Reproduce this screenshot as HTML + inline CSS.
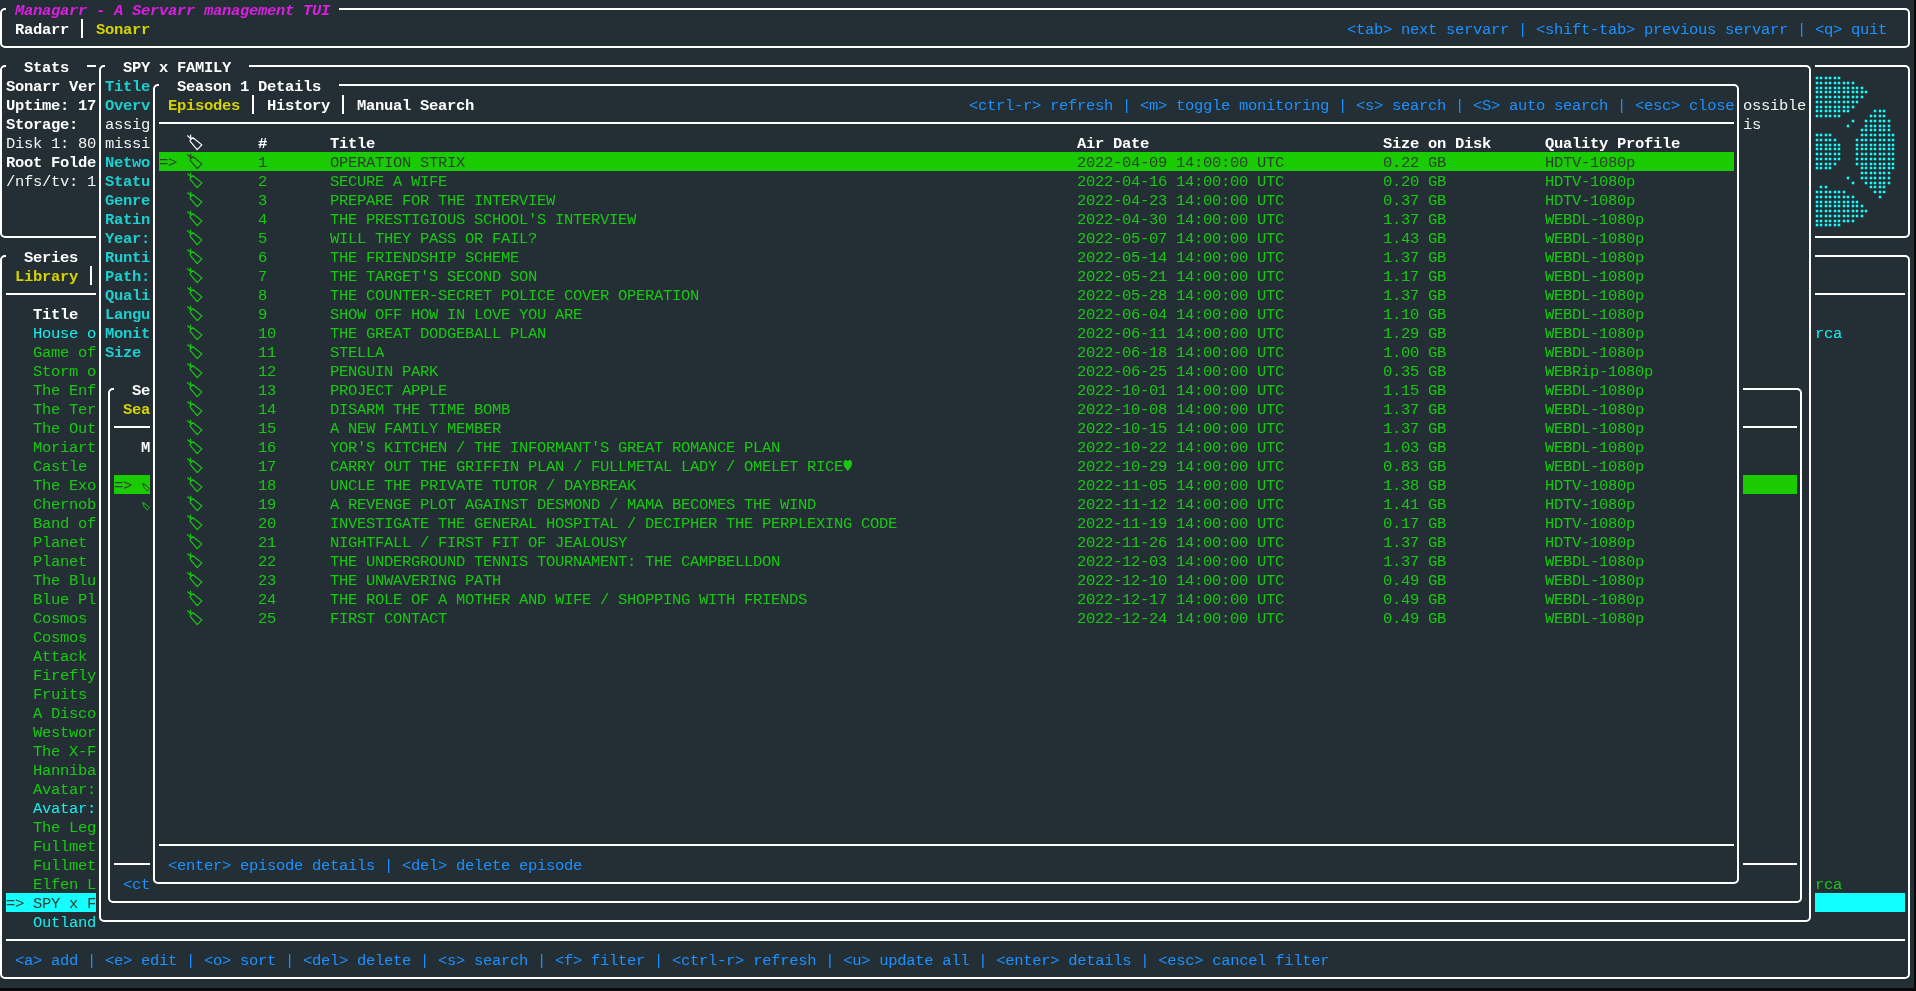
<!DOCTYPE html>
<html><head><meta charset="utf-8"><style>
html,body{margin:0;padding:0;}
body{width:1916px;height:991px;background:#0a0a0a;position:relative;overflow:hidden;}
#term{position:absolute;left:0;top:0;width:1913.5px;height:988px;background:#232f34;overflow:hidden;}
.t{position:absolute;will-change:transform;white-space:pre;font-family:"Liberation Mono",monospace;font-size:15.5px;letter-spacing:-0.3px;line-height:19px;height:19px;}
.b{font-weight:bold;}
.i{font-style:italic;}
.f{position:absolute;}
.bx{position:absolute;border:2px solid #fff;border-radius:5px;}
.tg{position:absolute;overflow:visible;}
</style></head><body><div id="term">
<svg width="0" height="0" style="position:absolute"><defs><g id="tag" fill="none" stroke-linejoin="round" stroke-linecap="round"><path d="M5.0 5.9 L1.6 2.8 M5.0 5.9 L4.6 2.1"/><path d="M7.0 4.7 L15.9 11.9 L11.2 16.6 L4.4 8.6 Q3.7 7.6 4.4 6.9 Z"/></g></defs></svg>
<div class="f" style="left:-3.5px;top:0px;width:1917px;height:57px;background:#232f34"></div>
<div class="bx" style="left:0px;top:8px;width:1906px;height:36px"></div>
<div class="f" style="left:5.5px;top:0px;width:333px;height:19px;background:#232f34"></div>
<div class="t b i" style="left:5.85px;top:2px;color:#da1fe0"> Managarr - A Servarr management TUI </div>
<div class="t b" style="left:14.85px;top:21px;color:#ffffff">Radarr</div>
<div class="f" style="left:81px;top:19px;width:2px;height:19px;background:#fff"></div>
<div class="t b" style="left:95.85px;top:21px;color:#d6d300">Sonarr</div>
<div class="t" style="left:1346.85px;top:21px;color:#1e90ff">&lt;tab&gt; next servarr | &lt;shift-tab&gt; previous servarr | &lt;q&gt; quit</div>
<div class="f" style="left:-3.5px;top:57px;width:549px;height:190px;background:#232f34"></div>
<div class="bx" style="left:0px;top:65px;width:538px;height:169px"></div>
<div class="f" style="left:5.5px;top:57px;width:81px;height:19px;background:#232f34"></div>
<div class="t b" style="left:5.85px;top:59px;color:#ffffff">  Stats  </div>
<div class="t b" style="left:5.85px;top:78px;color:#ffffff">Sonarr Ver</div>
<div class="t b" style="left:5.85px;top:97px;color:#ffffff">Uptime: 17</div>
<div class="t b" style="left:5.85px;top:116px;color:#ffffff">Storage:</div>
<div class="t" style="left:5.85px;top:135px;color:#f4f4f4">Disk 1: 80</div>
<div class="t b" style="left:5.85px;top:154px;color:#ffffff">Root Folde</div>
<div class="t" style="left:5.85px;top:173px;color:#f4f4f4">/nfs/tv: 1</div>
<div class="f" style="left:1346.5px;top:57px;width:567px;height:190px;background:#232f34"></div>
<div class="bx" style="left:1350px;top:65px;width:556px;height:169px"></div>
<svg class="tg" style="left:1800px;top:70px" width="110" height="165" fill="#14ffff"><rect x="15.75" y="6.75" width="2.5" height="2.5"/><rect x="19.75" y="6.75" width="2.5" height="2.5"/><rect x="24.75" y="6.75" width="2.5" height="2.5"/><rect x="28.75" y="6.75" width="2.5" height="2.5"/><rect x="33.75" y="6.75" width="2.5" height="2.5"/><rect x="37.75" y="6.75" width="2.5" height="2.5"/><rect x="15.75" y="11.75" width="2.5" height="2.5"/><rect x="19.75" y="11.75" width="2.5" height="2.5"/><rect x="24.75" y="11.75" width="2.5" height="2.5"/><rect x="28.75" y="11.75" width="2.5" height="2.5"/><rect x="33.75" y="11.75" width="2.5" height="2.5"/><rect x="37.75" y="11.75" width="2.5" height="2.5"/><rect x="42.75" y="11.75" width="2.5" height="2.5"/><rect x="46.75" y="11.75" width="2.5" height="2.5"/><rect x="51.75" y="11.75" width="2.5" height="2.5"/><rect x="15.75" y="16.75" width="2.5" height="2.5"/><rect x="19.75" y="16.75" width="2.5" height="2.5"/><rect x="24.75" y="16.75" width="2.5" height="2.5"/><rect x="28.75" y="16.75" width="2.5" height="2.5"/><rect x="33.75" y="16.75" width="2.5" height="2.5"/><rect x="37.75" y="16.75" width="2.5" height="2.5"/><rect x="42.75" y="16.75" width="2.5" height="2.5"/><rect x="46.75" y="16.75" width="2.5" height="2.5"/><rect x="51.75" y="16.75" width="2.5" height="2.5"/><rect x="55.75" y="16.75" width="2.5" height="2.5"/><rect x="60.75" y="16.75" width="2.5" height="2.5"/><rect x="15.75" y="20.75" width="2.5" height="2.5"/><rect x="19.75" y="20.75" width="2.5" height="2.5"/><rect x="24.75" y="20.75" width="2.5" height="2.5"/><rect x="28.75" y="20.75" width="2.5" height="2.5"/><rect x="33.75" y="20.75" width="2.5" height="2.5"/><rect x="37.75" y="20.75" width="2.5" height="2.5"/><rect x="42.75" y="20.75" width="2.5" height="2.5"/><rect x="46.75" y="20.75" width="2.5" height="2.5"/><rect x="51.75" y="20.75" width="2.5" height="2.5"/><rect x="55.75" y="20.75" width="2.5" height="2.5"/><rect x="60.75" y="20.75" width="2.5" height="2.5"/><rect x="64.75" y="20.75" width="2.5" height="2.5"/><rect x="15.75" y="25.75" width="2.5" height="2.5"/><rect x="19.75" y="25.75" width="2.5" height="2.5"/><rect x="24.75" y="25.75" width="2.5" height="2.5"/><rect x="28.75" y="25.75" width="2.5" height="2.5"/><rect x="33.75" y="25.75" width="2.5" height="2.5"/><rect x="37.75" y="25.75" width="2.5" height="2.5"/><rect x="42.75" y="25.75" width="2.5" height="2.5"/><rect x="46.75" y="25.75" width="2.5" height="2.5"/><rect x="51.75" y="25.75" width="2.5" height="2.5"/><rect x="55.75" y="25.75" width="2.5" height="2.5"/><rect x="60.75" y="25.75" width="2.5" height="2.5"/><rect x="15.75" y="30.75" width="2.5" height="2.5"/><rect x="19.75" y="30.75" width="2.5" height="2.5"/><rect x="24.75" y="30.75" width="2.5" height="2.5"/><rect x="28.75" y="30.75" width="2.5" height="2.5"/><rect x="33.75" y="30.75" width="2.5" height="2.5"/><rect x="37.75" y="30.75" width="2.5" height="2.5"/><rect x="42.75" y="30.75" width="2.5" height="2.5"/><rect x="46.75" y="30.75" width="2.5" height="2.5"/><rect x="51.75" y="30.75" width="2.5" height="2.5"/><rect x="55.75" y="30.75" width="2.5" height="2.5"/><rect x="15.75" y="35.75" width="2.5" height="2.5"/><rect x="19.75" y="35.75" width="2.5" height="2.5"/><rect x="24.75" y="35.75" width="2.5" height="2.5"/><rect x="28.75" y="35.75" width="2.5" height="2.5"/><rect x="33.75" y="35.75" width="2.5" height="2.5"/><rect x="37.75" y="35.75" width="2.5" height="2.5"/><rect x="42.75" y="35.75" width="2.5" height="2.5"/><rect x="46.75" y="35.75" width="2.5" height="2.5"/><rect x="51.75" y="35.75" width="2.5" height="2.5"/><rect x="15.75" y="39.75" width="2.5" height="2.5"/><rect x="19.75" y="39.75" width="2.5" height="2.5"/><rect x="24.75" y="39.75" width="2.5" height="2.5"/><rect x="28.75" y="39.75" width="2.5" height="2.5"/><rect x="33.75" y="39.75" width="2.5" height="2.5"/><rect x="37.75" y="39.75" width="2.5" height="2.5"/><rect x="42.75" y="39.75" width="2.5" height="2.5"/><rect x="46.75" y="39.75" width="2.5" height="2.5"/><rect x="73.75" y="39.75" width="2.5" height="2.5"/><rect x="78.75" y="39.75" width="2.5" height="2.5"/><rect x="82.75" y="39.75" width="2.5" height="2.5"/><rect x="15.75" y="44.75" width="2.5" height="2.5"/><rect x="19.75" y="44.75" width="2.5" height="2.5"/><rect x="24.75" y="44.75" width="2.5" height="2.5"/><rect x="28.75" y="44.75" width="2.5" height="2.5"/><rect x="33.75" y="44.75" width="2.5" height="2.5"/><rect x="37.75" y="44.75" width="2.5" height="2.5"/><rect x="69.75" y="44.75" width="2.5" height="2.5"/><rect x="73.75" y="44.75" width="2.5" height="2.5"/><rect x="78.75" y="44.75" width="2.5" height="2.5"/><rect x="82.75" y="44.75" width="2.5" height="2.5"/><rect x="51.75" y="49.75" width="2.5" height="2.5"/><rect x="64.75" y="49.75" width="2.5" height="2.5"/><rect x="69.75" y="49.75" width="2.5" height="2.5"/><rect x="73.75" y="49.75" width="2.5" height="2.5"/><rect x="78.75" y="49.75" width="2.5" height="2.5"/><rect x="82.75" y="49.75" width="2.5" height="2.5"/><rect x="87.75" y="49.75" width="2.5" height="2.5"/><rect x="46.75" y="54.75" width="2.5" height="2.5"/><rect x="64.75" y="54.75" width="2.5" height="2.5"/><rect x="69.75" y="54.75" width="2.5" height="2.5"/><rect x="73.75" y="54.75" width="2.5" height="2.5"/><rect x="78.75" y="54.75" width="2.5" height="2.5"/><rect x="82.75" y="54.75" width="2.5" height="2.5"/><rect x="87.75" y="54.75" width="2.5" height="2.5"/><rect x="60.75" y="58.75" width="2.5" height="2.5"/><rect x="64.75" y="58.75" width="2.5" height="2.5"/><rect x="69.75" y="58.75" width="2.5" height="2.5"/><rect x="73.75" y="58.75" width="2.5" height="2.5"/><rect x="78.75" y="58.75" width="2.5" height="2.5"/><rect x="82.75" y="58.75" width="2.5" height="2.5"/><rect x="87.75" y="58.75" width="2.5" height="2.5"/><rect x="15.75" y="63.75" width="2.5" height="2.5"/><rect x="19.75" y="63.75" width="2.5" height="2.5"/><rect x="24.75" y="63.75" width="2.5" height="2.5"/><rect x="28.75" y="63.75" width="2.5" height="2.5"/><rect x="60.75" y="63.75" width="2.5" height="2.5"/><rect x="64.75" y="63.75" width="2.5" height="2.5"/><rect x="69.75" y="63.75" width="2.5" height="2.5"/><rect x="73.75" y="63.75" width="2.5" height="2.5"/><rect x="78.75" y="63.75" width="2.5" height="2.5"/><rect x="82.75" y="63.75" width="2.5" height="2.5"/><rect x="87.75" y="63.75" width="2.5" height="2.5"/><rect x="91.75" y="63.75" width="2.5" height="2.5"/><rect x="15.75" y="68.75" width="2.5" height="2.5"/><rect x="19.75" y="68.75" width="2.5" height="2.5"/><rect x="24.75" y="68.75" width="2.5" height="2.5"/><rect x="28.75" y="68.75" width="2.5" height="2.5"/><rect x="33.75" y="68.75" width="2.5" height="2.5"/><rect x="55.75" y="68.75" width="2.5" height="2.5"/><rect x="60.75" y="68.75" width="2.5" height="2.5"/><rect x="64.75" y="68.75" width="2.5" height="2.5"/><rect x="69.75" y="68.75" width="2.5" height="2.5"/><rect x="73.75" y="68.75" width="2.5" height="2.5"/><rect x="78.75" y="68.75" width="2.5" height="2.5"/><rect x="82.75" y="68.75" width="2.5" height="2.5"/><rect x="87.75" y="68.75" width="2.5" height="2.5"/><rect x="91.75" y="68.75" width="2.5" height="2.5"/><rect x="15.75" y="73.75" width="2.5" height="2.5"/><rect x="19.75" y="73.75" width="2.5" height="2.5"/><rect x="24.75" y="73.75" width="2.5" height="2.5"/><rect x="28.75" y="73.75" width="2.5" height="2.5"/><rect x="33.75" y="73.75" width="2.5" height="2.5"/><rect x="37.75" y="73.75" width="2.5" height="2.5"/><rect x="55.75" y="73.75" width="2.5" height="2.5"/><rect x="60.75" y="73.75" width="2.5" height="2.5"/><rect x="64.75" y="73.75" width="2.5" height="2.5"/><rect x="69.75" y="73.75" width="2.5" height="2.5"/><rect x="73.75" y="73.75" width="2.5" height="2.5"/><rect x="78.75" y="73.75" width="2.5" height="2.5"/><rect x="82.75" y="73.75" width="2.5" height="2.5"/><rect x="87.75" y="73.75" width="2.5" height="2.5"/><rect x="91.75" y="73.75" width="2.5" height="2.5"/><rect x="15.75" y="77.75" width="2.5" height="2.5"/><rect x="19.75" y="77.75" width="2.5" height="2.5"/><rect x="24.75" y="77.75" width="2.5" height="2.5"/><rect x="28.75" y="77.75" width="2.5" height="2.5"/><rect x="33.75" y="77.75" width="2.5" height="2.5"/><rect x="37.75" y="77.75" width="2.5" height="2.5"/><rect x="55.75" y="77.75" width="2.5" height="2.5"/><rect x="60.75" y="77.75" width="2.5" height="2.5"/><rect x="64.75" y="77.75" width="2.5" height="2.5"/><rect x="69.75" y="77.75" width="2.5" height="2.5"/><rect x="73.75" y="77.75" width="2.5" height="2.5"/><rect x="78.75" y="77.75" width="2.5" height="2.5"/><rect x="82.75" y="77.75" width="2.5" height="2.5"/><rect x="87.75" y="77.75" width="2.5" height="2.5"/><rect x="91.75" y="77.75" width="2.5" height="2.5"/><rect x="15.75" y="82.75" width="2.5" height="2.5"/><rect x="19.75" y="82.75" width="2.5" height="2.5"/><rect x="24.75" y="82.75" width="2.5" height="2.5"/><rect x="28.75" y="82.75" width="2.5" height="2.5"/><rect x="33.75" y="82.75" width="2.5" height="2.5"/><rect x="37.75" y="82.75" width="2.5" height="2.5"/><rect x="55.75" y="82.75" width="2.5" height="2.5"/><rect x="60.75" y="82.75" width="2.5" height="2.5"/><rect x="64.75" y="82.75" width="2.5" height="2.5"/><rect x="69.75" y="82.75" width="2.5" height="2.5"/><rect x="73.75" y="82.75" width="2.5" height="2.5"/><rect x="78.75" y="82.75" width="2.5" height="2.5"/><rect x="82.75" y="82.75" width="2.5" height="2.5"/><rect x="87.75" y="82.75" width="2.5" height="2.5"/><rect x="91.75" y="82.75" width="2.5" height="2.5"/><rect x="15.75" y="87.75" width="2.5" height="2.5"/><rect x="19.75" y="87.75" width="2.5" height="2.5"/><rect x="24.75" y="87.75" width="2.5" height="2.5"/><rect x="28.75" y="87.75" width="2.5" height="2.5"/><rect x="33.75" y="87.75" width="2.5" height="2.5"/><rect x="37.75" y="87.75" width="2.5" height="2.5"/><rect x="55.75" y="87.75" width="2.5" height="2.5"/><rect x="60.75" y="87.75" width="2.5" height="2.5"/><rect x="64.75" y="87.75" width="2.5" height="2.5"/><rect x="69.75" y="87.75" width="2.5" height="2.5"/><rect x="73.75" y="87.75" width="2.5" height="2.5"/><rect x="78.75" y="87.75" width="2.5" height="2.5"/><rect x="82.75" y="87.75" width="2.5" height="2.5"/><rect x="87.75" y="87.75" width="2.5" height="2.5"/><rect x="91.75" y="87.75" width="2.5" height="2.5"/><rect x="15.75" y="92.75" width="2.5" height="2.5"/><rect x="19.75" y="92.75" width="2.5" height="2.5"/><rect x="24.75" y="92.75" width="2.5" height="2.5"/><rect x="28.75" y="92.75" width="2.5" height="2.5"/><rect x="33.75" y="92.75" width="2.5" height="2.5"/><rect x="55.75" y="92.75" width="2.5" height="2.5"/><rect x="60.75" y="92.75" width="2.5" height="2.5"/><rect x="64.75" y="92.75" width="2.5" height="2.5"/><rect x="69.75" y="92.75" width="2.5" height="2.5"/><rect x="73.75" y="92.75" width="2.5" height="2.5"/><rect x="78.75" y="92.75" width="2.5" height="2.5"/><rect x="82.75" y="92.75" width="2.5" height="2.5"/><rect x="87.75" y="92.75" width="2.5" height="2.5"/><rect x="91.75" y="92.75" width="2.5" height="2.5"/><rect x="15.75" y="96.75" width="2.5" height="2.5"/><rect x="19.75" y="96.75" width="2.5" height="2.5"/><rect x="24.75" y="96.75" width="2.5" height="2.5"/><rect x="28.75" y="96.75" width="2.5" height="2.5"/><rect x="60.75" y="96.75" width="2.5" height="2.5"/><rect x="64.75" y="96.75" width="2.5" height="2.5"/><rect x="69.75" y="96.75" width="2.5" height="2.5"/><rect x="73.75" y="96.75" width="2.5" height="2.5"/><rect x="78.75" y="96.75" width="2.5" height="2.5"/><rect x="82.75" y="96.75" width="2.5" height="2.5"/><rect x="87.75" y="96.75" width="2.5" height="2.5"/><rect x="91.75" y="96.75" width="2.5" height="2.5"/><rect x="60.75" y="101.75" width="2.5" height="2.5"/><rect x="64.75" y="101.75" width="2.5" height="2.5"/><rect x="69.75" y="101.75" width="2.5" height="2.5"/><rect x="73.75" y="101.75" width="2.5" height="2.5"/><rect x="78.75" y="101.75" width="2.5" height="2.5"/><rect x="82.75" y="101.75" width="2.5" height="2.5"/><rect x="87.75" y="101.75" width="2.5" height="2.5"/><rect x="46.75" y="106.75" width="2.5" height="2.5"/><rect x="60.75" y="106.75" width="2.5" height="2.5"/><rect x="64.75" y="106.75" width="2.5" height="2.5"/><rect x="69.75" y="106.75" width="2.5" height="2.5"/><rect x="73.75" y="106.75" width="2.5" height="2.5"/><rect x="78.75" y="106.75" width="2.5" height="2.5"/><rect x="82.75" y="106.75" width="2.5" height="2.5"/><rect x="87.75" y="106.75" width="2.5" height="2.5"/><rect x="51.75" y="111.75" width="2.5" height="2.5"/><rect x="64.75" y="111.75" width="2.5" height="2.5"/><rect x="69.75" y="111.75" width="2.5" height="2.5"/><rect x="73.75" y="111.75" width="2.5" height="2.5"/><rect x="78.75" y="111.75" width="2.5" height="2.5"/><rect x="82.75" y="111.75" width="2.5" height="2.5"/><rect x="87.75" y="111.75" width="2.5" height="2.5"/><rect x="19.75" y="115.75" width="2.5" height="2.5"/><rect x="24.75" y="115.75" width="2.5" height="2.5"/><rect x="69.75" y="115.75" width="2.5" height="2.5"/><rect x="73.75" y="115.75" width="2.5" height="2.5"/><rect x="78.75" y="115.75" width="2.5" height="2.5"/><rect x="82.75" y="115.75" width="2.5" height="2.5"/><rect x="15.75" y="120.75" width="2.5" height="2.5"/><rect x="19.75" y="120.75" width="2.5" height="2.5"/><rect x="24.75" y="120.75" width="2.5" height="2.5"/><rect x="28.75" y="120.75" width="2.5" height="2.5"/><rect x="33.75" y="120.75" width="2.5" height="2.5"/><rect x="37.75" y="120.75" width="2.5" height="2.5"/><rect x="42.75" y="120.75" width="2.5" height="2.5"/><rect x="73.75" y="120.75" width="2.5" height="2.5"/><rect x="78.75" y="120.75" width="2.5" height="2.5"/><rect x="82.75" y="120.75" width="2.5" height="2.5"/><rect x="15.75" y="125.75" width="2.5" height="2.5"/><rect x="19.75" y="125.75" width="2.5" height="2.5"/><rect x="24.75" y="125.75" width="2.5" height="2.5"/><rect x="28.75" y="125.75" width="2.5" height="2.5"/><rect x="33.75" y="125.75" width="2.5" height="2.5"/><rect x="37.75" y="125.75" width="2.5" height="2.5"/><rect x="42.75" y="125.75" width="2.5" height="2.5"/><rect x="46.75" y="125.75" width="2.5" height="2.5"/><rect x="51.75" y="125.75" width="2.5" height="2.5"/><rect x="78.75" y="125.75" width="2.5" height="2.5"/><rect x="15.75" y="130.75" width="2.5" height="2.5"/><rect x="19.75" y="130.75" width="2.5" height="2.5"/><rect x="24.75" y="130.75" width="2.5" height="2.5"/><rect x="28.75" y="130.75" width="2.5" height="2.5"/><rect x="33.75" y="130.75" width="2.5" height="2.5"/><rect x="37.75" y="130.75" width="2.5" height="2.5"/><rect x="42.75" y="130.75" width="2.5" height="2.5"/><rect x="46.75" y="130.75" width="2.5" height="2.5"/><rect x="51.75" y="130.75" width="2.5" height="2.5"/><rect x="55.75" y="130.75" width="2.5" height="2.5"/><rect x="15.75" y="134.75" width="2.5" height="2.5"/><rect x="19.75" y="134.75" width="2.5" height="2.5"/><rect x="24.75" y="134.75" width="2.5" height="2.5"/><rect x="28.75" y="134.75" width="2.5" height="2.5"/><rect x="33.75" y="134.75" width="2.5" height="2.5"/><rect x="37.75" y="134.75" width="2.5" height="2.5"/><rect x="42.75" y="134.75" width="2.5" height="2.5"/><rect x="46.75" y="134.75" width="2.5" height="2.5"/><rect x="51.75" y="134.75" width="2.5" height="2.5"/><rect x="55.75" y="134.75" width="2.5" height="2.5"/><rect x="60.75" y="134.75" width="2.5" height="2.5"/><rect x="15.75" y="139.75" width="2.5" height="2.5"/><rect x="19.75" y="139.75" width="2.5" height="2.5"/><rect x="24.75" y="139.75" width="2.5" height="2.5"/><rect x="28.75" y="139.75" width="2.5" height="2.5"/><rect x="33.75" y="139.75" width="2.5" height="2.5"/><rect x="37.75" y="139.75" width="2.5" height="2.5"/><rect x="42.75" y="139.75" width="2.5" height="2.5"/><rect x="46.75" y="139.75" width="2.5" height="2.5"/><rect x="51.75" y="139.75" width="2.5" height="2.5"/><rect x="55.75" y="139.75" width="2.5" height="2.5"/><rect x="60.75" y="139.75" width="2.5" height="2.5"/><rect x="64.75" y="139.75" width="2.5" height="2.5"/><rect x="15.75" y="144.75" width="2.5" height="2.5"/><rect x="19.75" y="144.75" width="2.5" height="2.5"/><rect x="24.75" y="144.75" width="2.5" height="2.5"/><rect x="28.75" y="144.75" width="2.5" height="2.5"/><rect x="33.75" y="144.75" width="2.5" height="2.5"/><rect x="37.75" y="144.75" width="2.5" height="2.5"/><rect x="42.75" y="144.75" width="2.5" height="2.5"/><rect x="46.75" y="144.75" width="2.5" height="2.5"/><rect x="51.75" y="144.75" width="2.5" height="2.5"/><rect x="55.75" y="144.75" width="2.5" height="2.5"/><rect x="60.75" y="144.75" width="2.5" height="2.5"/><rect x="15.75" y="149.75" width="2.5" height="2.5"/><rect x="19.75" y="149.75" width="2.5" height="2.5"/><rect x="24.75" y="149.75" width="2.5" height="2.5"/><rect x="28.75" y="149.75" width="2.5" height="2.5"/><rect x="33.75" y="149.75" width="2.5" height="2.5"/><rect x="37.75" y="149.75" width="2.5" height="2.5"/><rect x="42.75" y="149.75" width="2.5" height="2.5"/><rect x="46.75" y="149.75" width="2.5" height="2.5"/><rect x="51.75" y="149.75" width="2.5" height="2.5"/><rect x="15.75" y="153.75" width="2.5" height="2.5"/><rect x="19.75" y="153.75" width="2.5" height="2.5"/><rect x="24.75" y="153.75" width="2.5" height="2.5"/><rect x="28.75" y="153.75" width="2.5" height="2.5"/><rect x="33.75" y="153.75" width="2.5" height="2.5"/><rect x="37.75" y="153.75" width="2.5" height="2.5"/></svg>
<div class="f" style="left:-3.5px;top:247px;width:1917px;height:741px;background:#232f34"></div>
<div class="bx" style="left:0px;top:255px;width:1906px;height:720px"></div>
<div class="f" style="left:5.5px;top:247px;width:90px;height:19px;background:#232f34"></div>
<div class="t b" style="left:5.85px;top:249px;color:#ffffff">  Series  </div>
<div class="t b" style="left:14.85px;top:268px;color:#d6d300">Library</div>
<div class="f" style="left:90px;top:266px;width:2px;height:19px;background:#fff"></div>
<div class="f" style="left:5.5px;top:293px;width:1899px;height:2px;background:#fff"></div>
<div class="t b" style="left:32.85px;top:306px;color:#ffffff">Title</div>
<div class="t" style="left:32.85px;top:325px;color:#18eeee">House o</div>
<div class="t" style="left:32.85px;top:344px;color:#1ac814">Game of</div>
<div class="t" style="left:32.85px;top:363px;color:#1ac814">Storm o</div>
<div class="t" style="left:32.85px;top:382px;color:#1ac814">The Enf</div>
<div class="t" style="left:32.85px;top:401px;color:#1ac814">The Ter</div>
<div class="t" style="left:32.85px;top:420px;color:#1ac814">The Out</div>
<div class="t" style="left:32.85px;top:439px;color:#1ac814">Moriart</div>
<div class="t" style="left:32.85px;top:458px;color:#1ac814">Castle</div>
<div class="t" style="left:32.85px;top:477px;color:#1ac814">The Exo</div>
<div class="t" style="left:32.85px;top:496px;color:#1ac814">Chernob</div>
<div class="t" style="left:32.85px;top:515px;color:#1ac814">Band of</div>
<div class="t" style="left:32.85px;top:534px;color:#1ac814">Planet</div>
<div class="t" style="left:32.85px;top:553px;color:#1ac814">Planet</div>
<div class="t" style="left:32.85px;top:572px;color:#1ac814">The Blu</div>
<div class="t" style="left:32.85px;top:591px;color:#1ac814">Blue Pl</div>
<div class="t" style="left:32.85px;top:610px;color:#1ac814">Cosmos</div>
<div class="t" style="left:32.85px;top:629px;color:#1ac814">Cosmos</div>
<div class="t" style="left:32.85px;top:648px;color:#1ac814">Attack</div>
<div class="t" style="left:32.85px;top:667px;color:#1ac814">Firefly</div>
<div class="t" style="left:32.85px;top:686px;color:#1ac814">Fruits</div>
<div class="t" style="left:32.85px;top:705px;color:#1ac814">A Disco</div>
<div class="t" style="left:32.85px;top:724px;color:#1ac814">Westwor</div>
<div class="t" style="left:32.85px;top:743px;color:#1ac814">The X-F</div>
<div class="t" style="left:32.85px;top:762px;color:#1ac814">Hanniba</div>
<div class="t" style="left:32.85px;top:781px;color:#1ac814">Avatar:</div>
<div class="t" style="left:32.85px;top:800px;color:#18eeee">Avatar:</div>
<div class="t" style="left:32.85px;top:819px;color:#1ac814">The Leg</div>
<div class="t" style="left:32.85px;top:838px;color:#1ac814">Fullmet</div>
<div class="t" style="left:32.85px;top:857px;color:#1ac814">Fullmet</div>
<div class="t" style="left:32.85px;top:876px;color:#1ac814">Elfen L</div>
<div class="f" style="left:5.5px;top:893px;width:1899px;height:19px;background:#14ffff"></div>
<div class="t" style="left:5.85px;top:895px;color:#2c4032">=&gt; SPY x F</div>
<div class="t" style="left:32.85px;top:914px;color:#18eeee">Outland</div>
<div class="t" style="left:1814.85px;top:325px;color:#18eeee">rca</div>
<div class="t" style="left:1814.85px;top:876px;color:#1ac814">rca</div>
<div class="f" style="left:5.5px;top:939px;width:1899px;height:2px;background:#fff"></div>
<div class="t" style="left:14.85px;top:952px;color:#1e90ff">&lt;a&gt; add | &lt;e&gt; edit | &lt;o&gt; sort | &lt;del&gt; delete | &lt;s&gt; search | &lt;f&gt; filter | &lt;ctrl-r&gt; refresh | &lt;u&gt; update all | &lt;enter&gt; details | &lt;esc&gt; cancel filter</div>
<div class="f" style="left:95.5px;top:57px;width:1719px;height:874px;background:#232f34"></div>
<div class="bx" style="left:99px;top:65px;width:1708px;height:853px"></div>
<div class="f" style="left:104.5px;top:57px;width:144px;height:19px;background:#232f34"></div>
<div class="t b" style="left:104.85px;top:59px;color:#ffffff">  SPY x FAMILY  </div>
<div class="t b" style="left:104.85px;top:78px;color:#1ecfcf">Title</div>
<div class="t b" style="left:104.85px;top:97px;color:#1ecfcf">Overv</div>
<div class="t" style="left:104.85px;top:116px;color:#f4f4f4">assig</div>
<div class="t" style="left:104.85px;top:135px;color:#f4f4f4">missi</div>
<div class="t b" style="left:104.85px;top:154px;color:#1ecfcf">Netwo</div>
<div class="t b" style="left:104.85px;top:173px;color:#1ecfcf">Statu</div>
<div class="t b" style="left:104.85px;top:192px;color:#1ecfcf">Genre</div>
<div class="t b" style="left:104.85px;top:211px;color:#1ecfcf">Ratin</div>
<div class="t b" style="left:104.85px;top:230px;color:#1ecfcf">Year:</div>
<div class="t b" style="left:104.85px;top:249px;color:#1ecfcf">Runti</div>
<div class="t b" style="left:104.85px;top:268px;color:#1ecfcf">Path:</div>
<div class="t b" style="left:104.85px;top:287px;color:#1ecfcf">Quali</div>
<div class="t b" style="left:104.85px;top:306px;color:#1ecfcf">Langu</div>
<div class="t b" style="left:104.85px;top:325px;color:#1ecfcf">Monit</div>
<div class="t b" style="left:104.85px;top:344px;color:#1ecfcf">Size</div>
<div class="t" style="left:1742.85px;top:97px;color:#f4f4f4">ossible</div>
<div class="t" style="left:1742.85px;top:116px;color:#f4f4f4">is</div>
<div class="f" style="left:104.5px;top:380px;width:1701px;height:532px;background:#232f34"></div>
<div class="bx" style="left:108px;top:388px;width:1690px;height:511px"></div>
<div class="f" style="left:113.5px;top:380px;width:36px;height:19px;background:#232f34"></div>
<div class="t b" style="left:113.85px;top:382px;color:#ffffff">  Se</div>
<div class="t b" style="left:122.85px;top:401px;color:#d6d300">Sea</div>
<div class="f" style="left:113.5px;top:426px;width:1683px;height:2px;background:#fff"></div>
<div class="t b" style="left:140.85px;top:439px;color:#ffffff">M</div>
<div class="f" style="left:113.5px;top:475px;width:1683px;height:19px;background:#19cb00"></div>
<div class="t" style="left:113.85px;top:477px;color:#2c4032">=&gt;</div>
<svg class="tg" style="left:140.5px;top:475px;overflow:hidden" width="9" height="19"><g transform="translate(0.2,7.2) scale(0.53)"><use href="#tag" stroke="#2c4032" stroke-width="1.7"/></g></svg>
<svg class="tg" style="left:140.5px;top:494px;overflow:hidden" width="9" height="19"><g transform="translate(0.2,7.2) scale(0.53)"><use href="#tag" stroke="#1ac814" stroke-width="1.7"/></g></svg>
<div class="f" style="left:113.5px;top:863px;width:1683px;height:2px;background:#fff"></div>
<div class="t" style="left:122.85px;top:876px;color:#1e90ff">&lt;ct</div>
<div class="f" style="left:149.5px;top:76px;width:1593px;height:817px;background:#232f34"></div>
<div class="bx" style="left:153px;top:84px;width:1582px;height:796px"></div>
<div class="f" style="left:158.5px;top:76px;width:180px;height:19px;background:#232f34"></div>
<div class="t b" style="left:158.85px;top:78px;color:#ffffff">  Season 1 Details  </div>
<div class="t b" style="left:167.85px;top:97px;color:#d6d300">Episodes</div>
<div class="f" style="left:252px;top:95px;width:2px;height:19px;background:#fff"></div>
<div class="t b" style="left:266.85px;top:97px;color:#ffffff">History</div>
<div class="f" style="left:342px;top:95px;width:2px;height:19px;background:#fff"></div>
<div class="t b" style="left:356.85px;top:97px;color:#ffffff">Manual Search</div>
<div class="t" style="left:968.85px;top:97px;color:#1e90ff">&lt;ctrl-r&gt; refresh | &lt;m&gt; toggle monitoring | &lt;s&gt; search | &lt;S&gt; auto search | &lt;esc&gt; close</div>
<div class="f" style="left:158.5px;top:122px;width:1575px;height:2px;background:#fff"></div>
<svg class="tg" style="left:185.5px;top:133px" width="18" height="19"><use href="#tag" stroke="#ffffff" stroke-width="1.2"/></svg>
<div class="t b" style="left:257.85px;top:135px;color:#ffffff">#</div>
<div class="t b" style="left:329.85px;top:135px;color:#ffffff">Title</div>
<div class="t b" style="left:1076.85px;top:135px;color:#ffffff">Air Date</div>
<div class="t b" style="left:1382.85px;top:135px;color:#ffffff">Size on Disk</div>
<div class="t b" style="left:1544.85px;top:135px;color:#ffffff">Quality Profile</div>
<div class="f" style="left:158.5px;top:152px;width:1575px;height:19px;background:#19cb00"></div>
<div class="t" style="left:158.85px;top:154px;color:#2c4032">=&gt;</div>
<svg class="tg" style="left:185.5px;top:152px" width="18" height="19"><use href="#tag" stroke="#2c4032" stroke-width="1.2"/></svg>
<div class="t" style="left:257.85px;top:154px;color:#2c4032">1</div>
<div class="t" style="left:329.85px;top:154px;color:#2c4032">OPERATION STRIX</div>
<div class="t" style="left:1076.85px;top:154px;color:#2c4032">2022-04-09 14:00:00 UTC</div>
<div class="t" style="left:1382.85px;top:154px;color:#2c4032">0.22 GB</div>
<div class="t" style="left:1544.85px;top:154px;color:#2c4032">HDTV-1080p</div>
<svg class="tg" style="left:185.5px;top:171px" width="18" height="19"><use href="#tag" stroke="#1ac814" stroke-width="1.2"/></svg>
<div class="t" style="left:257.85px;top:173px;color:#1ac814">2</div>
<div class="t" style="left:329.85px;top:173px;color:#1ac814">SECURE A WIFE</div>
<div class="t" style="left:1076.85px;top:173px;color:#1ac814">2022-04-16 14:00:00 UTC</div>
<div class="t" style="left:1382.85px;top:173px;color:#1ac814">0.20 GB</div>
<div class="t" style="left:1544.85px;top:173px;color:#1ac814">HDTV-1080p</div>
<svg class="tg" style="left:185.5px;top:190px" width="18" height="19"><use href="#tag" stroke="#1ac814" stroke-width="1.2"/></svg>
<div class="t" style="left:257.85px;top:192px;color:#1ac814">3</div>
<div class="t" style="left:329.85px;top:192px;color:#1ac814">PREPARE FOR THE INTERVIEW</div>
<div class="t" style="left:1076.85px;top:192px;color:#1ac814">2022-04-23 14:00:00 UTC</div>
<div class="t" style="left:1382.85px;top:192px;color:#1ac814">0.37 GB</div>
<div class="t" style="left:1544.85px;top:192px;color:#1ac814">HDTV-1080p</div>
<svg class="tg" style="left:185.5px;top:209px" width="18" height="19"><use href="#tag" stroke="#1ac814" stroke-width="1.2"/></svg>
<div class="t" style="left:257.85px;top:211px;color:#1ac814">4</div>
<div class="t" style="left:329.85px;top:211px;color:#1ac814">THE PRESTIGIOUS SCHOOL&#x27;S INTERVIEW</div>
<div class="t" style="left:1076.85px;top:211px;color:#1ac814">2022-04-30 14:00:00 UTC</div>
<div class="t" style="left:1382.85px;top:211px;color:#1ac814">1.37 GB</div>
<div class="t" style="left:1544.85px;top:211px;color:#1ac814">WEBDL-1080p</div>
<svg class="tg" style="left:185.5px;top:228px" width="18" height="19"><use href="#tag" stroke="#1ac814" stroke-width="1.2"/></svg>
<div class="t" style="left:257.85px;top:230px;color:#1ac814">5</div>
<div class="t" style="left:329.85px;top:230px;color:#1ac814">WILL THEY PASS OR FAIL?</div>
<div class="t" style="left:1076.85px;top:230px;color:#1ac814">2022-05-07 14:00:00 UTC</div>
<div class="t" style="left:1382.85px;top:230px;color:#1ac814">1.43 GB</div>
<div class="t" style="left:1544.85px;top:230px;color:#1ac814">WEBDL-1080p</div>
<svg class="tg" style="left:185.5px;top:247px" width="18" height="19"><use href="#tag" stroke="#1ac814" stroke-width="1.2"/></svg>
<div class="t" style="left:257.85px;top:249px;color:#1ac814">6</div>
<div class="t" style="left:329.85px;top:249px;color:#1ac814">THE FRIENDSHIP SCHEME</div>
<div class="t" style="left:1076.85px;top:249px;color:#1ac814">2022-05-14 14:00:00 UTC</div>
<div class="t" style="left:1382.85px;top:249px;color:#1ac814">1.37 GB</div>
<div class="t" style="left:1544.85px;top:249px;color:#1ac814">WEBDL-1080p</div>
<svg class="tg" style="left:185.5px;top:266px" width="18" height="19"><use href="#tag" stroke="#1ac814" stroke-width="1.2"/></svg>
<div class="t" style="left:257.85px;top:268px;color:#1ac814">7</div>
<div class="t" style="left:329.85px;top:268px;color:#1ac814">THE TARGET&#x27;S SECOND SON</div>
<div class="t" style="left:1076.85px;top:268px;color:#1ac814">2022-05-21 14:00:00 UTC</div>
<div class="t" style="left:1382.85px;top:268px;color:#1ac814">1.17 GB</div>
<div class="t" style="left:1544.85px;top:268px;color:#1ac814">WEBDL-1080p</div>
<svg class="tg" style="left:185.5px;top:285px" width="18" height="19"><use href="#tag" stroke="#1ac814" stroke-width="1.2"/></svg>
<div class="t" style="left:257.85px;top:287px;color:#1ac814">8</div>
<div class="t" style="left:329.85px;top:287px;color:#1ac814">THE COUNTER-SECRET POLICE COVER OPERATION</div>
<div class="t" style="left:1076.85px;top:287px;color:#1ac814">2022-05-28 14:00:00 UTC</div>
<div class="t" style="left:1382.85px;top:287px;color:#1ac814">1.37 GB</div>
<div class="t" style="left:1544.85px;top:287px;color:#1ac814">WEBDL-1080p</div>
<svg class="tg" style="left:185.5px;top:304px" width="18" height="19"><use href="#tag" stroke="#1ac814" stroke-width="1.2"/></svg>
<div class="t" style="left:257.85px;top:306px;color:#1ac814">9</div>
<div class="t" style="left:329.85px;top:306px;color:#1ac814">SHOW OFF HOW IN LOVE YOU ARE</div>
<div class="t" style="left:1076.85px;top:306px;color:#1ac814">2022-06-04 14:00:00 UTC</div>
<div class="t" style="left:1382.85px;top:306px;color:#1ac814">1.10 GB</div>
<div class="t" style="left:1544.85px;top:306px;color:#1ac814">WEBDL-1080p</div>
<svg class="tg" style="left:185.5px;top:323px" width="18" height="19"><use href="#tag" stroke="#1ac814" stroke-width="1.2"/></svg>
<div class="t" style="left:257.85px;top:325px;color:#1ac814">10</div>
<div class="t" style="left:329.85px;top:325px;color:#1ac814">THE GREAT DODGEBALL PLAN</div>
<div class="t" style="left:1076.85px;top:325px;color:#1ac814">2022-06-11 14:00:00 UTC</div>
<div class="t" style="left:1382.85px;top:325px;color:#1ac814">1.29 GB</div>
<div class="t" style="left:1544.85px;top:325px;color:#1ac814">WEBDL-1080p</div>
<svg class="tg" style="left:185.5px;top:342px" width="18" height="19"><use href="#tag" stroke="#1ac814" stroke-width="1.2"/></svg>
<div class="t" style="left:257.85px;top:344px;color:#1ac814">11</div>
<div class="t" style="left:329.85px;top:344px;color:#1ac814">STELLA</div>
<div class="t" style="left:1076.85px;top:344px;color:#1ac814">2022-06-18 14:00:00 UTC</div>
<div class="t" style="left:1382.85px;top:344px;color:#1ac814">1.00 GB</div>
<div class="t" style="left:1544.85px;top:344px;color:#1ac814">WEBDL-1080p</div>
<svg class="tg" style="left:185.5px;top:361px" width="18" height="19"><use href="#tag" stroke="#1ac814" stroke-width="1.2"/></svg>
<div class="t" style="left:257.85px;top:363px;color:#1ac814">12</div>
<div class="t" style="left:329.85px;top:363px;color:#1ac814">PENGUIN PARK</div>
<div class="t" style="left:1076.85px;top:363px;color:#1ac814">2022-06-25 14:00:00 UTC</div>
<div class="t" style="left:1382.85px;top:363px;color:#1ac814">0.35 GB</div>
<div class="t" style="left:1544.85px;top:363px;color:#1ac814">WEBRip-1080p</div>
<svg class="tg" style="left:185.5px;top:380px" width="18" height="19"><use href="#tag" stroke="#1ac814" stroke-width="1.2"/></svg>
<div class="t" style="left:257.85px;top:382px;color:#1ac814">13</div>
<div class="t" style="left:329.85px;top:382px;color:#1ac814">PROJECT APPLE</div>
<div class="t" style="left:1076.85px;top:382px;color:#1ac814">2022-10-01 14:00:00 UTC</div>
<div class="t" style="left:1382.85px;top:382px;color:#1ac814">1.15 GB</div>
<div class="t" style="left:1544.85px;top:382px;color:#1ac814">WEBDL-1080p</div>
<svg class="tg" style="left:185.5px;top:399px" width="18" height="19"><use href="#tag" stroke="#1ac814" stroke-width="1.2"/></svg>
<div class="t" style="left:257.85px;top:401px;color:#1ac814">14</div>
<div class="t" style="left:329.85px;top:401px;color:#1ac814">DISARM THE TIME BOMB</div>
<div class="t" style="left:1076.85px;top:401px;color:#1ac814">2022-10-08 14:00:00 UTC</div>
<div class="t" style="left:1382.85px;top:401px;color:#1ac814">1.37 GB</div>
<div class="t" style="left:1544.85px;top:401px;color:#1ac814">WEBDL-1080p</div>
<svg class="tg" style="left:185.5px;top:418px" width="18" height="19"><use href="#tag" stroke="#1ac814" stroke-width="1.2"/></svg>
<div class="t" style="left:257.85px;top:420px;color:#1ac814">15</div>
<div class="t" style="left:329.85px;top:420px;color:#1ac814">A NEW FAMILY MEMBER</div>
<div class="t" style="left:1076.85px;top:420px;color:#1ac814">2022-10-15 14:00:00 UTC</div>
<div class="t" style="left:1382.85px;top:420px;color:#1ac814">1.37 GB</div>
<div class="t" style="left:1544.85px;top:420px;color:#1ac814">WEBDL-1080p</div>
<svg class="tg" style="left:185.5px;top:437px" width="18" height="19"><use href="#tag" stroke="#1ac814" stroke-width="1.2"/></svg>
<div class="t" style="left:257.85px;top:439px;color:#1ac814">16</div>
<div class="t" style="left:329.85px;top:439px;color:#1ac814">YOR&#x27;S KITCHEN / THE INFORMANT&#x27;S GREAT ROMANCE PLAN</div>
<div class="t" style="left:1076.85px;top:439px;color:#1ac814">2022-10-22 14:00:00 UTC</div>
<div class="t" style="left:1382.85px;top:439px;color:#1ac814">1.03 GB</div>
<div class="t" style="left:1544.85px;top:439px;color:#1ac814">WEBDL-1080p</div>
<svg class="tg" style="left:185.5px;top:456px" width="18" height="19"><use href="#tag" stroke="#1ac814" stroke-width="1.2"/></svg>
<div class="t" style="left:257.85px;top:458px;color:#1ac814">17</div>
<div class="t" style="left:329.85px;top:458px;color:#1ac814">CARRY OUT THE GRIFFIN PLAN / FULLMETAL LADY / OMELET RICE </div>
<svg class="tg" style="left:842.5px;top:456px" width="9" height="19"><path transform="translate(0.3,3.7)" fill="#1ac814" d="M4.5 11.3 C3.6 9.6 0.2 7.2 0.2 3.7 C0.2 1.5 1.3 0.2 2.5 0.2 C3.5 0.2 4.2 0.9 4.5 1.9 C4.8 0.9 5.5 0.2 6.5 0.2 C7.7 0.2 8.8 1.5 8.8 3.7 C8.8 7.2 5.4 9.6 4.5 11.3 Z"/></svg>
<div class="t" style="left:1076.85px;top:458px;color:#1ac814">2022-10-29 14:00:00 UTC</div>
<div class="t" style="left:1382.85px;top:458px;color:#1ac814">0.83 GB</div>
<div class="t" style="left:1544.85px;top:458px;color:#1ac814">WEBDL-1080p</div>
<svg class="tg" style="left:185.5px;top:475px" width="18" height="19"><use href="#tag" stroke="#1ac814" stroke-width="1.2"/></svg>
<div class="t" style="left:257.85px;top:477px;color:#1ac814">18</div>
<div class="t" style="left:329.85px;top:477px;color:#1ac814">UNCLE THE PRIVATE TUTOR / DAYBREAK</div>
<div class="t" style="left:1076.85px;top:477px;color:#1ac814">2022-11-05 14:00:00 UTC</div>
<div class="t" style="left:1382.85px;top:477px;color:#1ac814">1.38 GB</div>
<div class="t" style="left:1544.85px;top:477px;color:#1ac814">HDTV-1080p</div>
<svg class="tg" style="left:185.5px;top:494px" width="18" height="19"><use href="#tag" stroke="#1ac814" stroke-width="1.2"/></svg>
<div class="t" style="left:257.85px;top:496px;color:#1ac814">19</div>
<div class="t" style="left:329.85px;top:496px;color:#1ac814">A REVENGE PLOT AGAINST DESMOND / MAMA BECOMES THE WIND</div>
<div class="t" style="left:1076.85px;top:496px;color:#1ac814">2022-11-12 14:00:00 UTC</div>
<div class="t" style="left:1382.85px;top:496px;color:#1ac814">1.41 GB</div>
<div class="t" style="left:1544.85px;top:496px;color:#1ac814">HDTV-1080p</div>
<svg class="tg" style="left:185.5px;top:513px" width="18" height="19"><use href="#tag" stroke="#1ac814" stroke-width="1.2"/></svg>
<div class="t" style="left:257.85px;top:515px;color:#1ac814">20</div>
<div class="t" style="left:329.85px;top:515px;color:#1ac814">INVESTIGATE THE GENERAL HOSPITAL / DECIPHER THE PERPLEXING CODE</div>
<div class="t" style="left:1076.85px;top:515px;color:#1ac814">2022-11-19 14:00:00 UTC</div>
<div class="t" style="left:1382.85px;top:515px;color:#1ac814">0.17 GB</div>
<div class="t" style="left:1544.85px;top:515px;color:#1ac814">HDTV-1080p</div>
<svg class="tg" style="left:185.5px;top:532px" width="18" height="19"><use href="#tag" stroke="#1ac814" stroke-width="1.2"/></svg>
<div class="t" style="left:257.85px;top:534px;color:#1ac814">21</div>
<div class="t" style="left:329.85px;top:534px;color:#1ac814">NIGHTFALL / FIRST FIT OF JEALOUSY</div>
<div class="t" style="left:1076.85px;top:534px;color:#1ac814">2022-11-26 14:00:00 UTC</div>
<div class="t" style="left:1382.85px;top:534px;color:#1ac814">1.37 GB</div>
<div class="t" style="left:1544.85px;top:534px;color:#1ac814">HDTV-1080p</div>
<svg class="tg" style="left:185.5px;top:551px" width="18" height="19"><use href="#tag" stroke="#1ac814" stroke-width="1.2"/></svg>
<div class="t" style="left:257.85px;top:553px;color:#1ac814">22</div>
<div class="t" style="left:329.85px;top:553px;color:#1ac814">THE UNDERGROUND TENNIS TOURNAMENT: THE CAMPBELLDON</div>
<div class="t" style="left:1076.85px;top:553px;color:#1ac814">2022-12-03 14:00:00 UTC</div>
<div class="t" style="left:1382.85px;top:553px;color:#1ac814">1.37 GB</div>
<div class="t" style="left:1544.85px;top:553px;color:#1ac814">WEBDL-1080p</div>
<svg class="tg" style="left:185.5px;top:570px" width="18" height="19"><use href="#tag" stroke="#1ac814" stroke-width="1.2"/></svg>
<div class="t" style="left:257.85px;top:572px;color:#1ac814">23</div>
<div class="t" style="left:329.85px;top:572px;color:#1ac814">THE UNWAVERING PATH</div>
<div class="t" style="left:1076.85px;top:572px;color:#1ac814">2022-12-10 14:00:00 UTC</div>
<div class="t" style="left:1382.85px;top:572px;color:#1ac814">0.49 GB</div>
<div class="t" style="left:1544.85px;top:572px;color:#1ac814">WEBDL-1080p</div>
<svg class="tg" style="left:185.5px;top:589px" width="18" height="19"><use href="#tag" stroke="#1ac814" stroke-width="1.2"/></svg>
<div class="t" style="left:257.85px;top:591px;color:#1ac814">24</div>
<div class="t" style="left:329.85px;top:591px;color:#1ac814">THE ROLE OF A MOTHER AND WIFE / SHOPPING WITH FRIENDS</div>
<div class="t" style="left:1076.85px;top:591px;color:#1ac814">2022-12-17 14:00:00 UTC</div>
<div class="t" style="left:1382.85px;top:591px;color:#1ac814">0.49 GB</div>
<div class="t" style="left:1544.85px;top:591px;color:#1ac814">WEBDL-1080p</div>
<svg class="tg" style="left:185.5px;top:608px" width="18" height="19"><use href="#tag" stroke="#1ac814" stroke-width="1.2"/></svg>
<div class="t" style="left:257.85px;top:610px;color:#1ac814">25</div>
<div class="t" style="left:329.85px;top:610px;color:#1ac814">FIRST CONTACT</div>
<div class="t" style="left:1076.85px;top:610px;color:#1ac814">2022-12-24 14:00:00 UTC</div>
<div class="t" style="left:1382.85px;top:610px;color:#1ac814">0.49 GB</div>
<div class="t" style="left:1544.85px;top:610px;color:#1ac814">WEBDL-1080p</div>
<div class="f" style="left:158.5px;top:844px;width:1575px;height:2px;background:#fff"></div>
<div class="t" style="left:167.85px;top:857px;color:#1e90ff">&lt;enter&gt; episode details | &lt;del&gt; delete episode</div>
</div></body></html>
